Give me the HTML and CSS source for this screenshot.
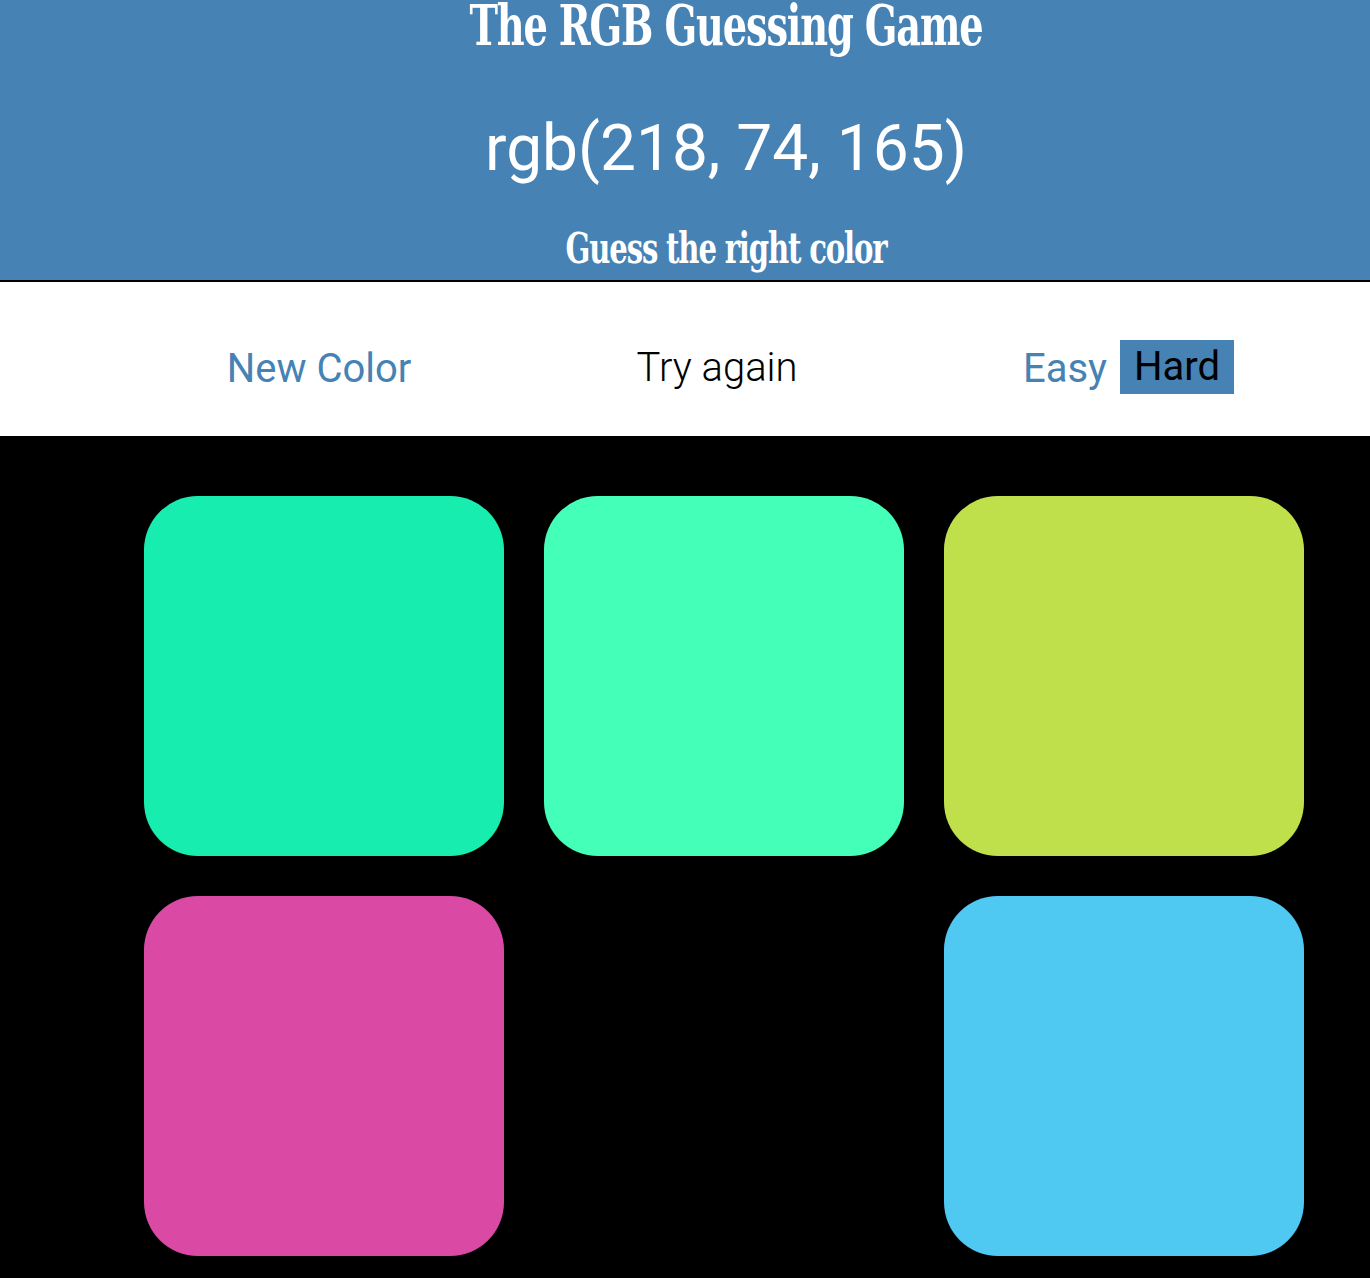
FILE: index.html
```html
<!DOCTYPE html>
<html>
<head>
<meta charset="utf-8">
<link rel="stylesheet" href="styles.css">
</head>
<body>
<header class="header">
  <h1 class="title">The RGB Guessing Game</h1>
  <div class="rgb">rgb(218, 74, 165)</div>
  <h2 class="subtitle">Guess the right color</h2>
</header>
<nav class="controls">
  <button class="btn new">New Color</button>
  <span class="message">Try again</span>
  <div class="modes">
    <button class="btn easy">Easy</button>
    <button class="btn hard">Hard</button>
  </div>
</nav>
<main class="board">
  <div class="grid">
    <div class="square" style="background: rgb(24, 237, 176)"></div>
    <div class="square" style="background: rgb(67, 255, 183)"></div>
    <div class="square" style="background: rgb(192, 224, 75)"></div>
    <div class="square" style="background: rgb(218, 74, 165)"></div>
    <div class="square hidden"></div>
    <div class="square" style="background: rgb(79, 200, 242)"></div>
  </div>
</main>
</body>
</html>
```
FILE: styles.css
```css
* { box-sizing: border-box; }
html, body { margin: 0; padding: 0; }
body {
  background: #000;
  font-family: Roboto, "Liberation Sans", sans-serif;
}
.header {
  background: steelblue;
  height: 282px;
  border-bottom: 2px solid #000;
  color: #fff;
  text-align: center;
  overflow: hidden;
  padding-left: 82px;
}
.title {
  margin: 0;
  font-family: "DejaVu Serif Condensed", "DejaVu Serif", serif;
  font-weight: bold;
  font-size: 56px;
  line-height: 50px;
  letter-spacing: -1.5px;
  transform: scaleX(0.76);
}
.rgb {
  font-size: 64px;
  line-height: 64px;
  margin-top: 67px;
  font-weight: 400;
}
.subtitle {
  margin: 0;
  margin-top: 47px;
  font-family: "DejaVu Serif Condensed", "DejaVu Serif", serif;
  font-weight: bold;
  font-size: 42px;
  line-height: 42px;
  letter-spacing: -1.5px;
  transform: scaleX(0.77);
}
.controls {
  background: #fff;
  height: 154px;
  display: grid;
  grid-template-columns: 1fr 1fr 1fr;
  align-items: center;
  padding: 16px 136px 0 136px;
}
.btn {
  border: none;
  background: none;
  font-family: Roboto, "Liberation Sans", sans-serif;
  font-size: 40px;
  color: steelblue;
  padding: 0 6px;
  cursor: pointer;
}
.new { justify-self: center; margin-top: 2px; }
.message {
  justify-self: center;
  font-size: 40px;
  font-weight: 300;
  color: #000;
  margin-left: 64px;
}
.modes {
  justify-self: end;
  display: flex;
  align-items: center;
  gap: 5px;
}
.hard {
  background: steelblue;
  color: #000;
  height: 54px;
  width: 114px;
  padding: 0;
  line-height: 54px;
}
.easy { padding: 0 8px; margin-top: 2px; }
.board {
  padding: 60px 66px 22px 144px;
}
.grid {
  display: grid;
  grid-template-columns: repeat(3, 360px);
  gap: 40px;
}
.square {
  width: 360px;
  height: 360px;
  border-radius: 54px;
}
.hidden { background: #000; }
```
